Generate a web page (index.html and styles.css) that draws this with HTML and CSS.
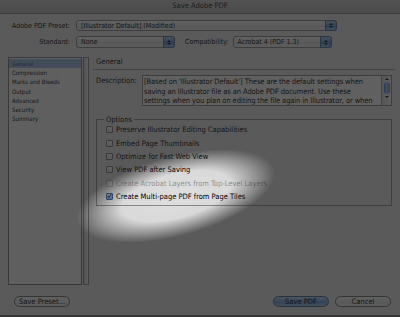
FILE: index.html
```html
<!DOCTYPE html>
<html>
<head>
<meta charset="utf-8">
<link rel="stylesheet" href="styles.css">
</head>
<body>
<div class="stage">
  <div class="dialog">
    <div class="titlebar">Save Adobe PDF</div>
    <div class="head">
      <div class="row">
        <span class="lbl">Adobe PDF Preset:</span>
        <div class="select w-preset"><span class="val">[Illustrator Default] (Modified)</span><span class="step"><i class="up"></i><i class="dn"></i></span></div>
      </div>
      <div class="row row2">
        <span class="lbl">Standard:</span>
        <div class="select w-std"><span class="val">None</span><span class="step"><i class="up"></i><i class="dn"></i></span></div>
        <span class="lbl2">Compatibility:</span>
        <div class="select w-std"><span class="val">Acrobat 4 (PDF 1.3)</span><span class="step"><i class="up"></i><i class="dn"></i></span></div>
      </div>
    </div>
    <div class="body">
      <div class="list">
        <div class="item sel">General</div>
        <div class="item">Compression</div>
        <div class="item">Marks and Bleeds</div>
        <div class="item">Output</div>
        <div class="item">Advanced</div>
        <div class="item">Security</div>
        <div class="item">Summary</div>
      </div>
      <div class="vscroll"></div>
      <div class="panel">
        <div class="ptitle">General</div>
        <div class="descrow">
          <span class="dlbl">Description:</span>
          <div class="desc">
            <div class="dtext">[Based on 'Illustrator Default'] These are the default settings when<br>saving an Illustrator file as an Adobe PDF document. Use these<br>settings when you plan on editing the file again in Illustrator, or when<br>you need to place it in a layout application such as InDesign, or when</div>
            <div class="dscroll"><i class="up"></i><span class="thumb"></span><i class="dn"></i></div>
          </div>
        </div>
        <fieldset class="options">
          <legend>Options</legend>
          <label class="cb"><span class="box"></span>Preserve Illustrator Editing Capabilities</label>
          <label class="cb"><span class="box"></span>Embed Page Thumbnails</label>
          <label class="cb"><span class="box"></span>Optimize for Fast Web View</label>
          <label class="cb"><span class="box"></span>View PDF after Saving</label>
          <label class="cb dis"><span class="box"></span>Create Acrobat Layers from Top-Level Layers</label>
          <label class="cb"><span class="box on"><svg viewBox="0 0 8 8" width="8" height="8"><path d="M1.5 4.2 L3.3 6.2 L7 0.8" fill="none" stroke="#111" stroke-width="1.4"/></svg></span>Create Multi-page PDF from Page Tiles</label>
        </fieldset>
      </div>
    </div>
    <div class="buttons">
      <div class="btn">Save Preset...</div>
      <div class="spacer"></div>
      <div class="btn def">Save PDF</div>
      <div class="btn">Cancel</div>
    </div>
  </div>
  <div class="dim"></div>
</div>
</body>
</html>
```
FILE: styles.css
```css
html, body { margin: 0; padding: 0; background: #5a5a5a; }
.stage {
  position: relative;
  width: 400px;
  height: 317px;
  overflow: hidden;
  font-family: "DejaVu Sans Condensed", "DejaVu Sans", sans-serif;
  font-stretch: condensed;
  font-size: 7px;
  color: #000;
}
.dialog {
  width: 400px;
  height: 317px;
  box-sizing: border-box;
  background: #e9e9e9;
  border-bottom: 2px solid #6a6a6a;
  display: flex;
  flex-direction: column;
}
.titlebar {
  height: 14px;
  line-height: 12px;
  text-align: center;
  font-size: 7.5px;
  background: linear-gradient(#cfcfcf, #b9b9b9);
  border-bottom: 1px solid #7d7d7d;
  box-sizing: border-box;
  color: #1a1a1a;
}
.head { padding-top: 6px; }
.row { display: flex; align-items: center; height: 11px; }
.row2 { margin-top: 5px; height: 12px; }
.lbl { width: 70px; text-align: right; margin-right: 6px; }
.lbl2 { margin-left: 10px; margin-right: 4px; }
.select {
  position: relative;
  height: 100%;
  box-sizing: border-box;
  border: 1px solid #8a8a8a;
  border-radius: 3px;
  background: linear-gradient(#ffffff, #ececec 50%, #e2e2e2 51%, #f4f4f4);
  display: flex;
  align-items: center;
  padding-left: 4px;
}
.w-preset { width: 261px; }
.w-std { width: 99px; }
.val { flex: 1; }
.step {
  width: 10px;
  align-self: stretch;
  margin: -1px -1px -1px 0;
  border-radius: 0 3px 3px 0;
  background: linear-gradient(#a9cdf5, #5f9be0 50%, #4a86d2 51%, #90c0f0);
  border: 1px solid #4c6f9c;
  display: flex;
  flex-direction: column;
  align-items: center;
  justify-content: center;
  gap: 1px;
}
.step i, .dscroll i { display: block; width: 0; height: 0; border-left: 2px solid transparent; border-right: 2px solid transparent; }
.step i.up, .dscroll i.up { border-bottom: 2px solid #111; }
.step i.dn, .dscroll i.dn { border-top: 2px solid #111; }

.body { display: flex; margin-top: 9px; padding-left: 8px; height: 228px; }
.list {
  width: 74px;
  box-sizing: border-box;
  background: #fbfbfb;
  border: 1px solid #7a7a7a;
  padding-top: 1px;
  font-size: 6px;
}
.item { height: 9.2px; line-height: 9px; padding-left: 3px; }
.item.sel { background: #9bbde6; color: #314a6a; }
.vscroll {
  width: 6px;
  margin-left: 1px;
  box-sizing: border-box;
  background: linear-gradient(90deg, #d2d2d2, #f4f4f4);
  border: 1px solid #8a8a8a;
}
.panel { margin-left: 4px; width: 302px; }
.ptitle {
  height: 12px;
  line-height: 10px;
  padding-left: 3px;
  font-size: 7.5px;
  border-bottom: 1px solid #9a9a9a;
}
.descrow { display: flex; margin-top: 5px; padding-left: 3px; }
.dlbl { width: 46px; padding-top: 1px; font-size: 7.5px; }
.desc {
  width: 250px;
  height: 31px;
  box-sizing: border-box;
  border: 1px solid #8a8a8a;
  background: #fff;
  display: flex;
  overflow: hidden;
}
.dtext {
  flex: 1;
  min-width: 0;
  padding: 1px 1px 0 1px;
  font-size: 7.5px;
  letter-spacing: -0.1px;
  line-height: 9.6px;
  white-space: nowrap;
  overflow: hidden;
}
.dscroll {
  width: 9px;
  flex: none;
  border-left: 1px solid #a0a0a0;
  background: linear-gradient(90deg, #dadada, #f6f6f6);
  display: flex;
  flex-direction: column;
  align-items: center;
  padding-top: 2px;
  gap: 2px;
}
.thumb { width: 6px; height: 12px; border-radius: 3px; background: linear-gradient(90deg, #4d86d0, #9cc6f2, #4d86d0); }
.options {
  margin: 9px 0 0 3px;
  width: 296px;
  height: 91px;
  box-sizing: border-box;
  border: 1px solid #8f8f8f;
  padding: 0 0 0 9px;
}
.options legend { padding: 0 2px; font-size: 7.5px; margin-left: -2px; }
.cb { display: flex; align-items: center; height: 13.4px; font-size: 7.5px; }
.cb:first-of-type { margin-top: -1px; }
.box {
  width: 7px;
  height: 7px;
  box-sizing: border-box;
  border: 1px solid #7c7c7c;
  background: linear-gradient(#fff, #e8e8e8);
  margin-right: 3px;
  display: flex;
  align-items: center;
  justify-content: center;
  border-radius: 1px;
}
.box.on { background: linear-gradient(#a9cdf5, #4f8ad6); border-color: #3e5f8c; overflow: visible; }
.box.on svg { margin-top: -2px; }
.cb.dis { color: #9a9a9a; }
.cb.dis .box { border-color: #b9b9b9; }

.buttons { display: flex; margin-top: 11px; padding: 0 9px 0 14px; height: 11px; }
.spacer { flex: 1; }
.btn {
  width: 56px;
  box-sizing: border-box;
  border: 1px solid #6a6a6a;
  border-radius: 6px;
  background: linear-gradient(#ffffff, #efefef 50%, #e0e0e0 51%, #f6f6f6);
  text-align: center;
  line-height: 9px;
  font-size: 7.5px;
}
.btn.def { background: linear-gradient(#b8d7f8, #72a7e6 50%, #5890da 51%, #a2cdf6); border-color: #45648e; margin-right: 6px; }

.dim {
  position: absolute;
  left: -424px;
  top: -404px;
  width: 1200px;
  height: 1200px;
  transform: rotate(-15deg);
  background: radial-gradient(ellipse 102px 40px at 50% 50%, rgba(29,29,29,0.05) 0%, rgba(29,29,29,0.08) 55%, rgba(29,29,29,0.7) 100%);
  pointer-events: none;
}
```
